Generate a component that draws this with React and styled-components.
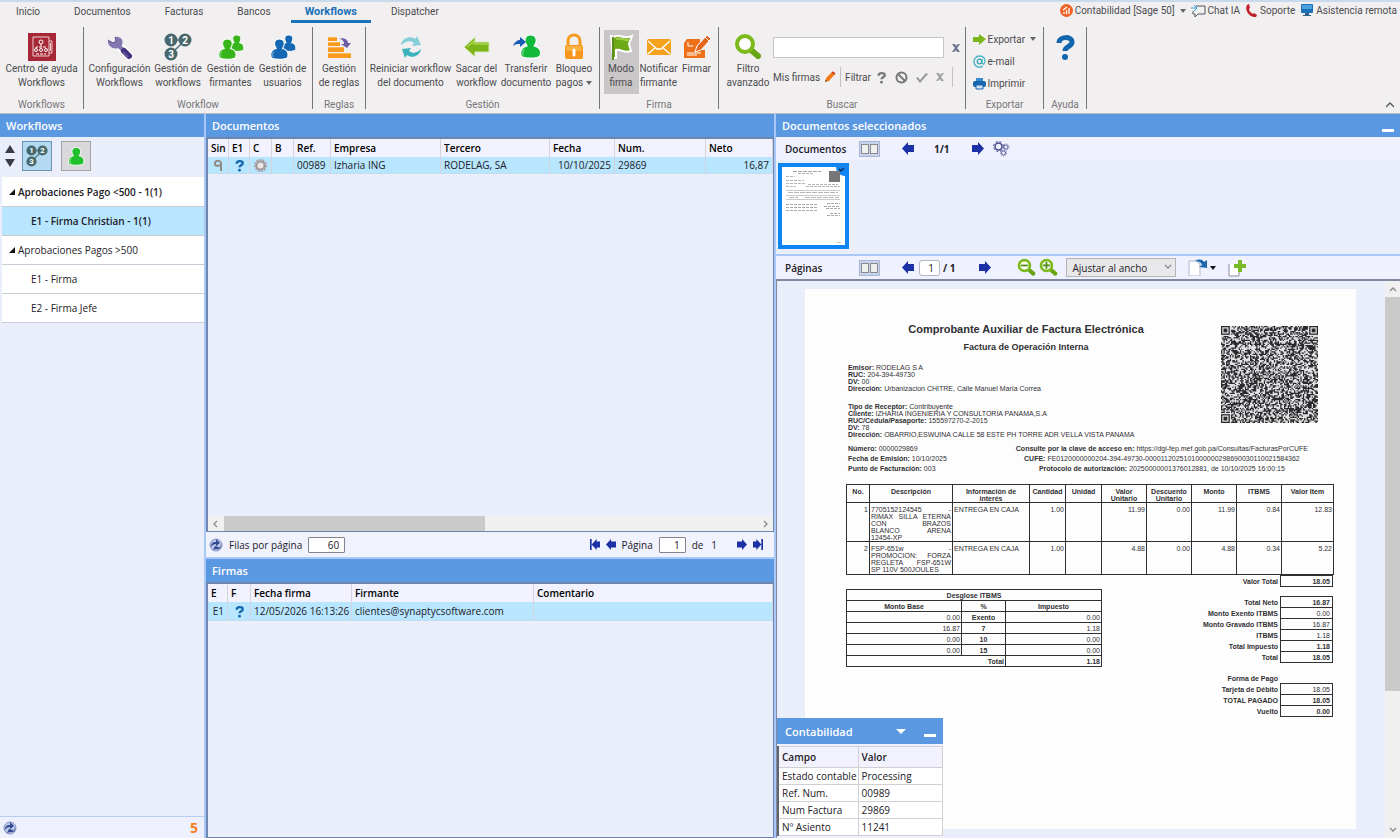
import React, { useState } from 'react';
import styled, { createGlobalStyle } from 'styled-components';

const EstiloGlobal = createGlobalStyle`
  * {
    box-sizing: border-box;
  }

  body {
    margin: 0;
    font-family: "Open Sans", "Noto Sans", sans-serif;
    font-size: 10px;
    color: #1d2026;
  }

  button, input, select {
    font-family: inherit;
    font-size: inherit;
    color: inherit;
    margin: 0;
  }

  button {
    background: none;
    border: none;
    padding: 0;
    cursor: pointer;
  }

  svg {
    display: block;
    flex: none;
  }
`;

const Contenedor = styled.div`
  display: flex;
  flex-direction: column;
  height: 100vh;
  min-height: 700px;
  overflow: hidden;
  background: #eaeefa;
`;

/* ---------- cinta superior ---------- */

const Cinta = styled.header`
  background: #f1efef;
  border-top: 2px solid #c8dbec;
  border-bottom: 1px solid #bdbdc0;
  font-family: Roboto, sans-serif;
  color: #4c4c50;
`;

const FilaPestanas = styled.div`
  display: flex;
  justify-content: space-between;
  height: 21px;
`;

const Pestanas = styled.nav`
  display: flex;
  gap: 6px;
  padding-left: 2px;
`;

const Pestana = styled.button`
  padding: 0 14px;
  border-bottom: 3px solid ${(p) => (p.$activa ? '#1b74bb' : 'transparent')};
  color: ${(p) => (p.$activa ? '#1b6fb8' : '#4c4c50')};
  font-size: ${(p) => (p.$activa ? 11 : 10)}px;
  font-weight: ${(p) => (p.$activa ? 700 : 400)};
`;

const Accesos = styled.div`
  display: flex;
  align-items: center;
  gap: 5px;
  padding: 0 3px 4px 0;
`;

const Acceso = styled.button`
  display: flex;
  align-items: center;
  gap: 2px;
  height: 16px;
`;

const Grupos = styled.div`
  display: flex;
  align-items: stretch;
  height: 90px;
  padding-top: 4px;
`;

const Grupo = styled.section`
  display: flex;
  flex-direction: column;
  align-items: center;
  width: ${(p) => p.$ancho}px;
  height: 82px;
  border-right: 1px solid #77777b;
`;

const NombreGrupo = styled.div`
  margin-top: auto;
  line-height: 8px;
  color: #77777c;
`;

const Botones = styled.div`
  display: flex;
  gap: ${(p) => p.$hueco || 0}px;
  height: 66px;
  padding-top: 3px;
`;

const BotonGrande = styled.button`
  display: flex;
  flex-direction: column;
  align-items: center;
  width: ${(p) => p.$ancho}px;
  height: 64px;
  padding-top: 3px;
  line-height: 14px;
  white-space: nowrap;
  background: ${(p) => (p.$activo ? '#c9c6c7' : 'transparent')};

  svg {
    margin-bottom: 1px;
  }
`;

const Buscador = styled.div`
  display: flex;
  flex-direction: column;
  gap: 9px;
  padding-top: 7px;
`;

const Linea = styled.div`
  display: flex;
  align-items: center;
  gap: ${(p) => p.$hueco || 4}px;
`;

const CampoBusqueda = styled.input`
  width: 171px;
  height: 21px;
  background: #ffffff;
  border: 1px solid #c6c4c7;
`;

const Separador = styled.span`
  width: 1px;
  height: 20px;
  background: #c2c0c3;
`;

const ListaExportar = styled.div`
  display: flex;
  flex-direction: column;
  gap: 6px;
  width: 64px;
  padding-top: 4px;
`;

const BotonContraer = styled.button`
  align-self: flex-end;
  margin-left: auto;
  padding: 0 6px 4px;
`;

/* ---------- paneles ---------- */

const Cuerpo = styled.main`
  flex: 1;
  min-height: 0;
  display: grid;
  grid-template-columns: 206px minmax(0, 568fr) minmax(0, 626fr);
`;

const Columna = styled.section`
  display: flex;
  flex-direction: column;
  min-width: 0;
  min-height: 0;
  border: 0 solid #a9c8f5;
  border-left-width: ${(p) => p.$izquierda || 0}px;
  border-right-width: ${(p) => p.$derecha || 0}px;
`;

const Cabecera = styled.h2`
  display: flex;
  align-items: center;
  justify-content: space-between;
  flex: none;
  height: 23px;
  margin: 0;
  padding: 0 6px;
  background: #5b98e2;
  color: #ffffff;
  font-size: 11px;
  font-weight: 600;
`;

const BarraArbol = styled.div`
  display: flex;
  align-items: center;
  gap: 9px;
  height: 40px;
  padding: 0 5px 2px;
`;

const Flechas = styled.div`
  display: flex;
  flex-direction: column;
  gap: 6px;
  margin-right: -2px;
`;

const BotonVista = styled.button`
  display: grid;
  place-items: center;
  width: 30px;
  height: 30px;
  background: ${(p) => (p.$activo ? '#b3daf0' : '#d9d9dc')};
  border: 1px solid ${(p) => (p.$activo ? '#6c93b5' : '#a3a3a6')};
`;

const Arbol = styled.ul`
  list-style: none;
  margin: 0 0 0 2px;
  padding: 0;
`;

const Nodo = styled.li`
  display: flex;
  align-items: center;
  gap: 3px;
  height: ${(p) => (p.$alto ? 30 : 29)}px;
  padding-left: ${(p) => (p.$hijo ? 29 : 7)}px;
  background: ${(p) => (p.$activo ? '#b8e6ff' : '#ffffff')};
  border-bottom: 1px solid #c9ccd6;
  font-weight: ${(p) => (p.$negrita ? 600 : 400)};
`;

const PieArbol = styled.footer`
  display: flex;
  align-items: center;
  justify-content: space-between;
  height: 22px;
  margin-top: auto;
  padding: 0 6px 0 3px;
  border-top: 1px solid #b4cdf0;
  background: #eef0fd;
`;

const Cinco = styled.b`
  color: #f58220;
  font-size: 14px;
  line-height: 20px;
`;

const Rejilla = styled.div`
  flex: 1;
  min-height: 0;
  display: flex;
  flex-direction: column;
  border: 1px solid #6f87b0;
  border-width: 2px 1px 1px 2px;
`;

const Tabla = styled.table`
  width: 100%;
  table-layout: fixed;
  border-collapse: separate;
  border-spacing: 0;

  th, td {
    height: ${(p) => p.$alto}px;
    padding: 0 3px;
    border-right: 1px solid #d6d3dc;
    text-align: left;
    line-height: 14px;
    white-space: nowrap;
  }

  th {
    height: 18px;
    background: #f1f2fd;
    color: #000000;
    font-weight: 600;
  }

  td {
    background: #b8e6fe;
    border-bottom: 1px solid #c3dcee;
  }

  td svg {
    margin: 0 auto;
  }
`;

const CeldaDerecha = styled.td`
  && {
    text-align: right;
  }
`;

const Deslizador = styled.div`
  display: flex;
  align-items: center;
  justify-content: space-between;
  flex-direction: ${(p) => (p.$vertical ? 'column' : 'row')};
  ${(p) => (p.$vertical ? 'width' : 'height')}: 15px;
  ${(p) => (p.$vertical ? 'padding: 4px 0' : 'padding: 0 4px; margin-top: auto')};
  background: #f0f0f0;
`;

const Pista = styled.div`
  flex: 1;
  ${(p) => (p.$vertical ? 'width: 15px; margin: 4px 0' : 'height: 15px; margin: 0 4px')};

  &::before {
    content: "";
    display: block;
    background: #cacaca;
    ${(p) => (p.$vertical ? 'width: 15px; height: 75%' : 'height: 15px; width: 49%')};
  }
`;

const Paginador = styled.div`
  display: flex;
  align-items: center;
  gap: 6px;
  height: 27px;
  padding: 0 11px 0 3px;
  background: #f0f2fe;
  border-bottom: 2px solid #a9c8f5;
  white-space: pre;
`;

const CampoNumero = styled.input`
  width: ${(p) => p.$ancho}px;
  height: 16px;
  padding: 0 5px;
  background: #ffffff;
  border: 1px solid ${(p) => (p.$redondo ? '#b4b6c2' : '#85858a')};
  border-radius: ${(p) => (p.$redondo ? 3 : 1)}px;
  text-align: right;
`;

const Espacio = styled.span`
  flex: ${(p) => (p.$ancho ? `0 0 ${p.$ancho}px` : 1)};
`;

const PanelFirmas = styled.div`
  display: flex;
  flex-direction: column;
  height: 279px;
`;

/* ---------- documentos seleccionados ---------- */

const BarraVisor = styled.div`
  display: flex;
  align-items: center;
  flex: none;
  height: 23px;
  padding-left: 9px;
  background: #eff1fe;
`;

const Titulo = styled.b`
  width: 74px;
  font-weight: 600;
  font-size: 10px;
`;

const BotonHojas = styled.button`
  display: grid;
  place-items: center;
  width: 21px;
  height: 16px;
  background: #c8d3ec;
  border: 1px solid #a9b6d3;
`;

const Miniaturas = styled.div`
  flex: none;
  height: 96px;
  padding: 3px 2px;
  border-bottom: 2px solid #a9c8f5;
`;

const Miniatura = styled.button`
  display: block;
  width: 71px;
  height: 86px;
  border: 4px solid #0f85f2;
  background: #ffffff;
`;

const CajaAjuste = styled.div`
  position: relative;

  svg {
    position: absolute;
    top: 5px;
    right: 4px;
    pointer-events: none;
  }
`;

const Ajuste = styled.select`
  display: block;
  appearance: none;
  width: 110px;
  height: 19px;
  padding: 0 0 0 5px;
  background: #e8e8ea;
  border: 1px solid #b4b4b9;
  border-radius: 0;
`;

const Visor = styled.div`
  position: relative;
  flex: 1;
  min-height: 0;
  display: flex;
  border: 2px solid #8189a0;
  border-width: 2px 0 0 1px;
`;

const Lienzo = styled.div`
  flex: 1;
  min-width: 0;
  display: flex;
  padding: 8px 29px 9px 28px;
`;

const Hoja = styled.article`
  flex: 1;
  min-width: 0;
  overflow: hidden;
  padding: 34px 23px 0 41px;
  background: #fefdfe;
  color: #303033;
  font-family: "Liberation Sans", Arial, sans-serif;
  font-size: 7px;
  line-height: 7px;
`;

const CabeceraHoja = styled.div`
  display: flex;
  justify-content: space-between;
  padding-right: 15px;
`;

const TextosHoja = styled.div`
  flex: 0 1 360px;
  white-space: nowrap;
`;

const TituloHoja = styled.h3`
  margin: 0 0 6px;
  font-size: ${(p) => (p.$menor ? 9 : 11)}px;
  line-height: 12px;
  text-align: center;
`;

const Bloque = styled.div`
  padding-top: ${(p) => p.$arriba}px;
`;

const Claves = styled.div`
  display: flex;
  justify-content: space-between;
  padding: 6px 25px 0 2px;
  line-height: 10px;
`;

const Centrado = styled.div`
  text-align: center;
`;

const TablaHoja = styled.table`
  width: ${(p) => p.$ancho || '100%'};
  table-layout: fixed;
  border-collapse: collapse;

  th, td {
    height: ${(p) => p.$fila || 11}px;
    padding: 0 1px;
    border: 1px solid #303033;
    vertical-align: ${(p) => (p.$fila ? 'top' : 'middle')};
    line-height: 7px;
  }

  td {
    text-align: right;
  }
`;

const Fila = styled.tr`
  && > * {
    height: ${(p) => p.$alto}px;
    padding-top: 3px;
  }
`;

const Texto = styled.td`
  && {
    text-align: left;
  }
`;

const LineaJusta = styled.div`
  text-align: justify;
  text-align-last: ${(p) => (p.$ultima ? 'left' : 'justify')};
`;

const PieHoja = styled.div`
  display: flex;
  justify-content: space-between;
`;

const Desglose = styled.div`
  flex: 0 1 255px;
  padding-top: 14px;
`;

const Resumen = styled.table`
  border-collapse: collapse;
  margin-left: auto;

  th {
    padding: 0 2px 0 0;
    text-align: right;
    line-height: 9px;
  }

  td {
    width: 52px;
    height: ${(p) => p.$alto || 11}px;
    padding: 0 2px;
    border: 1px solid #303033;
    text-align: right;
    font-weight: ${(p) => (p.$negrita ? 700 : 400)};
  }
`;

const Celda = styled.td`
  && {
    font-weight: ${(p) => (p.$negrita ? 700 : 400)};
    border-color: ${(p) => (p.$libre ? 'transparent transparent #303033' : '#303033')};
  }
`;

const Flotante = styled.aside`
  position: absolute;
  left: 0;
  bottom: 0;
  width: 166px;
  padding-bottom: 2px;
  background: #eef0fb;
`;

const CabeceraFlotante = styled(Cabecera)`
  height: 26px;
  margin-bottom: 2px;
  padding: 0 7px 0 8px;
`;

const TablaCampos = styled.table`
  width: 100%;
  table-layout: fixed;
  border-collapse: collapse;
  border: 1px solid #63656c;
  border-left-width: 2px;
  background: #ffffff;

  th, td {
    height: ${(p) => p.$alto}px;
    padding: 0 3px;
    border: 1px solid #cfcfd4;
    line-height: 14px;
    text-align: left;
    white-space: nowrap;
  }

  th {
    height: 21px;
    background: #f1f2fd;
    font-weight: 600;
  }
`;

/* ---------- iconos ---------- */

const Svg = ({ w = 28, h = w, box = '0 0 28 28', children }) => (
  <svg width={w} height={h} viewBox={box} fill="none" aria-hidden="true">
    {children}
  </svg>
);

const IconoAyudaCentro = () => (
  <Svg>
    <rect width="28" height="28" fill="#a62836" />
    <path d="M5 4h16v19H5zM21 8h3v12h-3M22.500 10v8" stroke="#f3cdd0" />
    <circle cx="13" cy="9" r="2" stroke="#fff" />
    <path d="M13 11v3M8 15v-1h10v1M8 21h10" stroke="#fff" strokeDasharray="3 1" />
    <circle cx="8" cy="17" r="1.500" stroke="#fff" />
    <circle cx="13" cy="17" r="1.500" stroke="#fff" />
    <circle cx="18" cy="17" r="1.500" stroke="#fff" />
  </Svg>
);

const IconoLlave = () => (
  <Svg>
    <path d="M12 12l11 11" stroke="#fff" strokeWidth="8" strokeLinecap="round" />
    <path d="M2 7l5 3 3-2-1-4C15 3 18 8 16 12l-3 3C7 17 1 13 2 7z" fill="#8377b0" />
    <path d="M2 7l5 3 3-2-1-4" stroke="#5c4f91" />
    <path d="M12 12l5 5" stroke="#8377b0" strokeWidth="4" />
    <path d="M18 18l5 5" stroke="#42317d" strokeWidth="6" strokeLinecap="round" />
    <path d="M17 19l5 5" stroke="#6b5ba3" strokeWidth="1.500" />
  </Svg>
);

const IconoPasos = ({ tam = 28 }) => (
  <Svg w={tam}>
    <path d="M7 7h14L7 21" stroke="#55777c" strokeWidth="1.500" />
    {[[7, 7, 1], [21, 7, 2], [7, 21, 3]].map(([x, y, n]) => (
      <g key={n}>
        <circle cx={x} cy={y} r="6.500" fill="#47696e" />
        <text x={x} y={y + 3.5} fill="#fff" fontSize="10" fontWeight="700" textAnchor="middle" fontFamily="Roboto, sans-serif">
          {n}
        </text>
      </g>
    ))}
  </Svg>
);

const Persona = ({ color, x = 0, y = 0, escala = 1 }) => (
  <g transform={`translate(${x} ${y}) scale(${escala})`}>
    <path
      d="M8 0c5 0 6 5 3 9 4 1 6 4 5 8-1 3-15 3-16 0-1-4 1-7 5-8C2 5 3 0 8 0z"
      fill={color}
      stroke="#fff"
      strokeWidth="1"
    />
    <path d="M3 12c-2 1-2 3-1 5" stroke="#fff" strokeOpacity="0.3" strokeWidth="1.500" />
  </g>
);

const IconoPersonas = ({ color }) => (
  <Svg>
    <Persona color={color} x={13} y={2} escala={0.85} />
    <Persona color={color} x={2} y={6} escala={1.05} />
  </Svg>
);

const IconoReglas = () => (
  <Svg>
    <path d="M3 4h9v4H3zM3 9h12v4H3zM3 14h16v5H3zM3 20h23v5H3z" fill="#f79a1e" />
    <path d="M3 4h9v1H3zM3 9h12v1H3zM3 14h16v1H3zM3 20h23v1H3z" fill="#fbb84f" />
    <path d="M14 6c5-2 9 1 9 4h3l-4 5-6-4h3c0-3-2-5-5-5z" fill="#6d5da6" />
  </Svg>
);

const IconoReiniciar = () => (
  <Svg>
    <path d="M4 12C5 5 13 2 18 6l2-3 4 9-9 1 2-3c-4-3-8-2-13 2z" fill="#84cfd9" />
    <path d="M24 16c-1 7-9 10-14 6l-2 3-3-9 9-1-2 3c4 3 8 2 12-2z" fill="#3cb2bc" />
  </Svg>
);

const IconoFlechaVerde = () => (
  <Svg>
    <path d="M1 14L12 4v5h14v10H12v5z" fill="#7cb518" stroke="#d8ecc0" />
    <path d="M4 14l7-6v3h14" stroke="#a9d34c" strokeWidth="1.500" />
  </Svg>
);

const IconoTransferir = () => (
  <Svg>
    <Persona color="#12b93b" x={9} y={2} escala={1.2} />
    <path d="M1 13c2-5 5-6 7-6V4l6 5-6 5v-3c-3 0-4 0-7 2z" fill="#1c5bb5" />
  </Svg>
);

const IconoCandado = () => (
  <Svg>
    <path d="M8 13V8c0-8 12-8 12 0v5" stroke="#f59b1c" strokeWidth="3" />
    <rect x="5" y="12" width="18" height="14" rx="2" fill="#f7951d" />
    <rect x="6" y="13" width="16" height="5" rx="1" fill="#fab243" />
    <path d="M14 17v5" stroke="#fff" strokeWidth="3" strokeLinecap="round" />
  </Svg>
);

const IconoBandera = () => (
  <Svg>
    <path d="M7 4c6-4 9 3 18-1l-3 8 2 7c-8 3-10-3-15-1v8H6L4 3z" fill="#6da817" stroke="#fff" strokeWidth="2" />
    <path d="M6 4v23" stroke="#5b8f1b" strokeWidth="2" />
    <path d="M9 6c5-2 8 2 13 1" stroke="#a2cf4c" strokeWidth="2" />
  </Svg>
);

const IconoSobre = () => (
  <Svg>
    <rect x="2" y="6" width="24" height="16" rx="2" fill="#f5a11b" />
    <path d="M3 8l9 8h4l9-8M3 21l8-7M25 21l-8-7" stroke="#fff" strokeWidth="1.300" />
  </Svg>
);

const IconoFirmar = () => (
  <Svg>
    <path d="M4 6h13v4l-4 7h9v8H1V10z" fill="#ee7019" />
    <path d="M4 20h14M4 22h10M5 9v4h5" stroke="#fff" />
    <path d="M12 19l2-6L24 2l4 4-10 11z" fill="#e4651b" stroke="#fff" />
    <path d="M22 4l4 4" stroke="#fff" />
  </Svg>
);

const IconoLupa = ({ tam = 28, signo }) => (
  <Svg w={tam}>
    <path d="M17 17l7 6" stroke="#68a516" strokeWidth="6" strokeLinecap="round" />
    <circle cx="11" cy="11" r="8" stroke="#7dba1d" strokeWidth="4" fill="#fdfdfd" />
    {signo && <path d={signo === '+' ? 'M11 6v10M6 11h10' : 'M6 11h10'} stroke="#4f8a10" strokeWidth="2.500" />}
  </Svg>
);

const IconoPregunta = ({ tam = 28, color = '#1266ae' }) => (
  <Svg w={tam}>
    <path d="M8 10c0-7 13-7 13-1 0 5-7 4-7 9" stroke={color} strokeWidth="5" />
    <circle cx="14" cy="24" r="3" fill={color} />
  </Svg>
);

const IconoLapiz = () => (
  <Svg w={12} box="0 0 12 12">
    <path d="M1 11l1-4 6-6 3 2-6 7z" fill="#f07a1c" />
    <path d="M8 1l3 2" stroke="#d33d1c" strokeWidth="2" />
    <path d="M1 11l1-2 1 1z" fill="#333" />
  </Svg>
);

const Equis = ({ color }) => (
  <Svg w={10} box="0 0 10 10">
    <path d="M1 1h3l1 2 2-2h2L6 5l3 4H6L5 7 3 9H1l3-4z" fill={color} />
  </Svg>
);

const IconoProhibido = () => (
  <Svg w={13} box="0 0 13 13">
    <circle cx="6.500" cy="6.500" r="5" stroke="#77777a" strokeWidth="2" />
    <path d="M3 3l7 7" stroke="#77777a" strokeWidth="2" />
  </Svg>
);

const IconoVisto = () => (
  <Svg w={13} box="0 0 13 13">
    <path d="M1 7l2-1 2 3 6-7 2 1-8 9z" fill="#98989b" />
  </Svg>
);

const IconoExportar = () => (
  <Svg w={13} box="0 0 13 13">
    <path d="M0 4h6V1l7 5-7 6V9H0z" fill="#7ab51d" />
  </Svg>
);

const IconoCorreo = () => (
  <Svg w={13} box="0 0 13 13">
    <circle cx="6.500" cy="6.500" r="2.300" stroke="#2a9db5" strokeWidth="1.300" />
    <path d="M9 4v4c1 2 3 1 3-2C12 2 9 1 6 1 3 1 1 4 1 7c0 4 5 7 9 4" stroke="#46b4c9" strokeWidth="1.300" />
  </Svg>
);

const IconoImprimir = () => (
  <Svg w={13} box="0 0 13 13">
    <path d="M3 1h7v3H3z" fill="#3a8ad0" />
    <rect y="4" width="13" height="6" rx="2" fill="#1766ac" />
    <path d="M3 8h7v4H3z" fill="#cfe4f6" stroke="#1766ac" />
  </Svg>
);

const Caret = ({ color = '#66666a' }) => (
  <Svg w={6} h={4} box="0 0 6 4">
    <path d="M0 0h6L3 4z" fill={color} />
  </Svg>
);

const IconoSage = () => (
  <Svg w={13} box="0 0 13 13">
    <circle cx="6.500" cy="6.500" r="6.500" fill="#f0642a" />
    <path d="M4 10V8M6.500 10V6M9 10V4M3 6l4-3" stroke="#fff" strokeWidth="1.300" />
  </Svg>
);

const IconoChat = () => (
  <Svg w={15} h={14} box="0 0 15 14">
    <path d="M5 2h9v8H7l-3 3v-3H2V7" stroke="#4e565f" />
    <path d="M0 4h5M3 1l3 3-3 3" stroke="#2e9ed6" />
  </Svg>
);

const IconoTelefono = () => (
  <Svg w={13} box="0 0 13 13">
    <path d="M2 1l2-1 1 4-1 1c0 2 2 4 4 5l1-1 3 2-1 2C5 14-1 6 2 1z" fill="#c11f2b" />
  </Svg>
);

const IconoMonitor = () => (
  <Svg w={14} h={13} box="0 0 14 13">
    <rect x="1" y="0" width="12" height="9" rx="1" fill="#1a6fb8" />
    <rect x="2" y="1" width="10" height="4" fill="#4ba0de" />
    <path d="M5 9h4v2h2v1H3v-1h2z" fill="#2c5f8c" />
  </Svg>
);

const FlechaAzul = ({ derecha, tope, tam = 12 }) => (
  <Svg w={tam} h={tam + 1} box="0 0 12 13">
    <g transform={derecha ? 'translate(12 0) scale(-1 1)' : undefined}>
      {tope ? (
        <path d="M0 0h2v13H0zM2 6.500L8 0v3h4v7H8v3z" fill="#1c31a5" />
      ) : (
        <path d="M0 6.500L6 0v3h6v7H6v3z" fill="#1c31a5" />
      )}
    </g>
  </Svg>
);

const IconoHojas = () => (
  <Svg w={17} h={10} box="0 0 17 10">
    <rect x="0.500" y="0.500" width="7" height="9" fill="#efeff0" stroke="#8a8a8e" />
    <rect x="9.500" y="0.500" width="7" height="9" fill="#efeff0" stroke="#8a8a8e" />
  </Svg>
);

const IconoEngranes = () => (
  <Svg w={17} h={16} box="0 0 17 16">
    <circle cx="5.500" cy="5.500" r="3.500" stroke="#4b4a8e" strokeWidth="1.500" />
    <circle cx="5.500" cy="5.500" r="5" stroke="#4b4a8e" strokeDasharray="2 2" />
    <circle cx="13" cy="6" r="2" stroke="#6463a5" />
    <circle cx="13" cy="6" r="3" stroke="#6463a5" strokeDasharray="1 1" />
    <circle cx="10.500" cy="12" r="2" stroke="#6463a5" />
    <circle cx="10.500" cy="12" r="3" stroke="#6463a5" strokeDasharray="1 1" />
  </Svg>
);

const IconoRefrescar = () => (
  <Svg w={14} box="0 0 14 14">
    <circle cx="7" cy="7" r="6" fill="#b9c7e8" stroke="#8593c4" />
    <path d="M2 9c0-4 2-5 5-5V1l4 4-4 3V6C5 6 3 7 2 9z" fill="#34488f" />
    <path d="M12 6c1 4-2 6-5 5l-3 1 2-4 4 1-1 1c2 0 3-2 3-4z" fill="#34488f" />
  </Svg>
);

const IconoBoligrafo = () => (
  <Svg w={12} h={13} box="0 0 12 13">
    <path d="M8 6C5 8 2 6 3 4c1-3 6-3 6 1v7" stroke="#8f8981" strokeWidth="2" />
  </Svg>
);

const IconoEngrane = () => (
  <Svg w={13} box="0 0 13 13">
    <circle cx="6.500" cy="6.500" r="5.500" stroke="#a9a2a4" strokeWidth="2" strokeDasharray="2 1" />
    <circle cx="6.500" cy="6.500" r="4" fill="#ebe6e7" stroke="#a39b9e" strokeWidth="2" />
  </Svg>
);

const Triangulo = ({ abajo }) => (
  <Svg w={10} h={8} box="0 0 10 8">
    <path d={abajo ? 'M0 0h10L5 8z' : 'M0 8h10L5 0z'} fill="#3b3d45" />
  </Svg>
);

const Desplegado = () => (
  <Svg w={6} box="0 0 6 6">
    <path d="M6 0v6H0z" fill="#111" />
  </Svg>
);

const Chevron = ({ d, color = '#8a8a90' }) => (
  <Svg w={8} box="0 0 8 8">
    <path d={d} stroke={color} strokeWidth="1.300" />
  </Svg>
);

const Minimizar = () => (
  <Svg w={12} h={12} box="0 0 12 12">
    <path d="M0 9h12v3H0z" fill="#fff" />
  </Svg>
);

const IconoGirar = () => (
  <Svg w={20} h={17} box="0 0 20 17">
    <path d="M1 2h7l4 3v12H1z" fill="#fff" stroke="#b3b8c6" />
    <path d="M7 2c4-2 7-2 9 1l3-2v8l-8-1 3-2c-1-3-4-4-7-4z" fill="#1d67af" />
  </Svg>
);

const IconoAnadir = () => (
  <Svg w={19} h={18} box="0 0 19 18">
    <path d="M1 5h10v12H1z" fill="#fff" />
    <path d="M1 5v12h10v-6" stroke="#8b8f9a" />
    <path d="M10 1h4v4h4v4h-4v4h-4V9H6V5h4z" fill="#78b928" />
  </Svg>
);

// Trama de módulos con una semilla fija para que no cambie entre renders
const MODULOS = 77;

const crearTrama = () => {
  let semilla = 20251010;
  let d = '';
  for (let y = 0; y < MODULOS; y += 1) {
    for (let x = 0; x < MODULOS; x += 1) {
      semilla = (semilla * 1103515245 + 12345) % 2147483648;
      const esquina = (x < 8 || x > MODULOS - 9) && (y < 8 || y > MODULOS - 9);
      const abajoDerecha = x > MODULOS - 9 && y > MODULOS - 9;
      if ((!esquina || abajoDerecha) && semilla / 2147483648 > 0.48) {
        d += `M${x} ${y}h1v1h-1z`;
      }
    }
  }
  return d;
};

const TRAMA = crearTrama();

const CodigoQR = ({ tam = 97 }) => (
  <Svg w={tam} box={`0 0 ${MODULOS} ${MODULOS}`}>
    <rect width={MODULOS} height={MODULOS} fill="#e2e2e4" />
    <path d={TRAMA} fill="#2a2a2d" />
    {[[0, 0], [MODULOS - 7, 0], [0, MODULOS - 7]].map(([x, y]) => (
      <g key={`${x}-${y}`}>
        <rect x={x + 0.5} y={y + 0.5} width="6" height="6" stroke="#2a2a2d" />
        <rect x={x + 2} y={y + 2} width="3" height="3" fill="#2a2a2d" />
      </g>
    ))}
  </Svg>
);

const VistaMiniatura = () => (
  <Svg w={63} h={78} box="0 0 63 78">
    <path d="M54 0h9v9c-5 0-9-4-9-9z" fill="#0f85f2" />
    <path d="M57 2l2 2 3-3" stroke="#0c2a55" strokeWidth="1.500" />
    <rect x="47" y="4" width="11" height="11" fill="#77777a" />
    <path d="M11 4.500h28" stroke="#a4a4a7" strokeDasharray="4 1" />
    <path d="M16 6.500h16M4 9.500h9M4 13.500h18M4 16.500h20M4 19.500h10M26 17.500h30M24 19.500h34" stroke="#b4b4b7" strokeDasharray="3 1" />
    <path d="M4 23.500h54M4 28.500h54M4 32.500h54" stroke="#c9c9cc" />
    <path d="M6 25.500h50M7 30.500h9M23 30.500h34" stroke="#b4b4b7" strokeDasharray="5 1" />
    <path d="M4 37.500h31M4 40.500h31M4 43.500h31M45 36.500h13M42 39.500h16M44 41.500h14M48 46.500h10M45 48.500h13" stroke="#a9a9ac" strokeDasharray="3 1" />
    <path d="M55 75.500h4" stroke="#c4c4c6" />
  </Svg>
);

/* ---------- datos ---------- */

const PESTANAS = ['Inicio', 'Documentos', 'Facturas', 'Bancos', 'Workflows', 'Dispatcher'];

const GRUPOS = [
  {
    nombre: 'Workflows',
    ancho: 84,
    botones: [{ lineas: ['Centro de ayuda', 'Workflows'], ancho: 80, icono: <IconoAyudaCentro /> }],
  },
  {
    nombre: 'Workflow',
    ancho: 229,
    botones: [
      { lineas: ['Configuración', 'Workflows'], ancho: 64, icono: <IconoLlave /> },
      { lineas: ['Gestión de', 'workflows'], ancho: 53, icono: <IconoPasos /> },
      { lineas: ['Gestión de', 'firmantes'], ancho: 52, icono: <IconoPersonas color="#37b51b" /> },
      { lineas: ['Gestión de', 'usuarios'], ancho: 52, icono: <IconoPersonas color="#1467b3" /> },
    ],
  },
  {
    nombre: 'Reglas',
    ancho: 53,
    botones: [{ lineas: ['Gestión', 'de reglas'], ancho: 50, icono: <IconoReglas /> }],
  },
  {
    nombre: 'Gestión',
    ancho: 234,
    botones: [
      { lineas: ['Reiniciar workflow', 'del documento'], ancho: 84, icono: <IconoReiniciar /> },
      { lineas: ['Sacar del', 'workflow'], ancho: 48, icono: <IconoFlechaVerde /> },
      { lineas: ['Transferir', 'documento'], ancho: 51, icono: <IconoTransferir /> },
      { lineas: ['Bloqueo', 'pagos'], ancho: 45, icono: <IconoCandado />, menu: true },
    ],
  },
  {
    nombre: 'Firma',
    ancho: 119,
    botones: [
      { lineas: ['Modo', 'firma'], ancho: 35, icono: <IconoBandera />, activo: true },
      { lineas: ['Notificar', 'firmante'], ancho: 40, icono: <IconoSobre /> },
      { lineas: ['Firmar'], ancho: 36, icono: <IconoFirmar /> },
    ],
  },
];

const ARBOL = [
  { texto: 'Aprobaciones Pago <500 - 1(1)', negrita: true, alto: true },
  { texto: 'E1 - Firma Christian - 1(1)', negrita: true, hijo: true, activo: true },
  { texto: 'Aprobaciones Pagos >500' },
  { texto: 'E1 - Firma', hijo: true },
  { texto: 'E2 - Firma Jefe', hijo: true },
];

const COLUMNAS = [
  ['Sin', 21],
  ['E1', 21],
  ['C', 22],
  ['B', 22],
  ['Ref.', 37],
  ['Empresa', 110],
  ['Tercero', 109],
  ['Fecha', 65],
  ['Num.', 91],
  ['Neto'],
];

const ARTICULOS = [
  {
    alto: 39,
    descripcion: ['7705152124545 -', 'RIMAX SILLA ETERNA', 'CON BRAZOS', 'BLANCO ARENA', '12454-XP'],
    valores: ['11.99', '0.00', '11.99', '0.84', '12.83'],
  },
  {
    alto: 33,
    descripcion: ['FSP-651w -', 'PROMOCION: FORZA', 'REGLETA FSP-651W', 'SP 110V 500JOULES'],
    valores: ['4.88', '0.00', '4.88', '0.34', '5.22'],
  },
];

const IMPUESTOS = [
  ['0.00', 'Exento', '0.00'],
  ['16.87', '7', '1.18'],
  ['0.00', '10', '0.00'],
  ['0.00', '15', '0.00'],
];

const TOTALES = [
  ['Total Neto', '16.87', true],
  ['Monto Exento ITBMS', '0.00'],
  ['Monto Gravado ITBMS', '16.87'],
  ['ITBMS', '1.18'],
  ['Total Impuesto', '1.18', true],
  ['Total', '18.05', true],
];

const PAGOS = [
  ['Tarjeta de Débito', '18.05'],
  ['TOTAL PAGADO', '18.05', true],
  ['Vuelto', '0.00', true],
];

const CAMPOS = [
  ['Estado contable', 'Processing'],
  ['Ref. Num.', '00989'],
  ['Num Factura', '29869'],
  ['Nº Asiento', '11241'],
];

/* ---------- componentes ---------- */

function Ribbon() {
  const [pestana, setPestana] = useState('Workflows');
  const [busqueda, setBusqueda] = useState('');

  return (
    <Cinta>
      <FilaPestanas>
        <Pestanas>
          {PESTANAS.map((nombre) => (
            <Pestana key={nombre} $activa={nombre === pestana} onClick={() => setPestana(nombre)}>
              {nombre}
            </Pestana>
          ))}
        </Pestanas>
        <Accesos>
          <Acceso><IconoSage />Contabilidad [Sage 50] <Espacio $ancho={1} /><Caret /></Acceso>
          <Acceso><IconoChat />Chat IA</Acceso>
          <Acceso><IconoTelefono />Soporte</Acceso>
          <Acceso><IconoMonitor />Asistencia remota</Acceso>
        </Accesos>
      </FilaPestanas>
      <Grupos>
        {GRUPOS.map((grupo) => (
          <Grupo key={grupo.nombre} $ancho={grupo.ancho}>
            <Botones>
              {grupo.botones.map((b) => (
                <BotonGrande key={b.lineas.join(' ')} $ancho={b.ancho} $activo={b.activo}>
                  {b.icono}
                  <span>{b.lineas[0]}</span>
                  {b.menu ? (
                    <Linea $hueco={3}><span>{b.lineas[1]}</span><Caret /></Linea>
                  ) : (
                    <span>{b.lineas[1]}</span>
                  )}
                </BotonGrande>
              ))}
            </Botones>
            <NombreGrupo>{grupo.nombre}</NombreGrupo>
          </Grupo>
        ))}
        <Grupo $ancho={247}>
          <Botones>
            <BotonGrande $ancho={50}>
              <IconoLupa />
              <span>Filtro</span>
              <span>avanzado</span>
            </BotonGrande>
            <Buscador>
              <Linea $hueco={7}>
                <CampoBusqueda
                  aria-label="Buscar"
                  value={busqueda}
                  onChange={(e) => setBusqueda(e.target.value)}
                />
                <button aria-label="Limpiar" onClick={() => setBusqueda('')}><Equis color="#67708d" /></button>
              </Linea>
              <Linea>
                <button>Mis firmas</button>
                <button aria-label="Firmas"><IconoLapiz /></button>
                <Separador />
                <span>Filtrar</span>
                <Linea $hueco={7}>
                  <button aria-label="Pendiente"><IconoPregunta tam={13} color="#77777a" /></button>
                  <button aria-label="Rechazado"><IconoProhibido /></button>
                  <button aria-label="Aprobado"><IconoVisto /></button>
                  <button aria-label="Quitar"><Equis color="#a0a0a3" /></button>
                  <Separador />
                </Linea>
              </Linea>
            </Buscador>
          </Botones>
          <NombreGrupo>Buscar</NombreGrupo>
        </Grupo>
        <Grupo $ancho={78}>
          <ListaExportar>
            <Acceso><IconoExportar />Exportar <Espacio $ancho={1} /><Caret /></Acceso>
            <Acceso><IconoCorreo />e-mail</Acceso>
            <Acceso><IconoImprimir />Imprimir</Acceso>
          </ListaExportar>
          <NombreGrupo>Exportar</NombreGrupo>
        </Grupo>
        <Grupo $ancho={43}>
          <Botones>
            <BotonGrande $ancho={40} aria-label="Ayuda"><IconoPregunta /></BotonGrande>
          </Botones>
          <NombreGrupo>Ayuda</NombreGrupo>
        </Grupo>
        <BotonContraer aria-label="Contraer"><Chevron d="M0 6l4-4 4 4" color="#55555a" /></BotonContraer>
      </Grupos>
    </Cinta>
  );
}

function PanelWorkflows() {
  return (
    <Columna $derecha={2}>
      <Cabecera>Workflows</Cabecera>
      <BarraArbol>
        <Flechas>
          <button aria-label="Subir"><Triangulo /></button>
          <button aria-label="Bajar"><Triangulo abajo /></button>
        </Flechas>
        <BotonVista $activo aria-label="Por workflow"><IconoPasos tam={22} /></BotonVista>
        <BotonVista aria-label="Por firmante">
          <Svg w={20}><Persona color="#20c02c" x={4} y={2} escala={1.3} /></Svg>
        </BotonVista>
      </BarraArbol>
      <Arbol>
        {ARBOL.map((n) => (
          <Nodo key={n.texto} $hijo={n.hijo} $negrita={n.negrita} $activo={n.activo} $alto={n.alto}>
            {!n.hijo && <Desplegado />}
            <span>{n.texto}</span>
          </Nodo>
        ))}
      </Arbol>
      <PieArbol>
        <button aria-label="Refrescar"><IconoRefrescar /></button>
        <Cinco>5</Cinco>
      </PieArbol>
    </Columna>
  );
}

function PanelDocumentos() {
  return (
    <Columna>
      <Cabecera>Documentos</Cabecera>
      <Rejilla>
        <Tabla $alto={17}>
          <colgroup>
            {COLUMNAS.map(([nombre, ancho]) => (
              <col key={nombre} width={ancho} />
            ))}
          </colgroup>
          <thead>
            <tr>{COLUMNAS.map(([nombre]) => <th key={nombre}>{nombre}</th>)}</tr>
          </thead>
          <tbody>
            <tr>
              <td><IconoBoligrafo /></td>
              <td><IconoPregunta tam={13} /></td>
              <td><IconoEngrane /></td>
              <td />
              <td>00989</td>
              <td>Izharia ING</td>
              <td>RODELAG, SA</td>
              <CeldaDerecha>10/10/2025</CeldaDerecha>
              <td>29869</td>
              <CeldaDerecha>16,87</CeldaDerecha>
            </tr>
          </tbody>
        </Tabla>
        <Deslizador>
          <Chevron d="M5 1L2 4l3 3" />
          <Pista />
          <Chevron d="M3 1l3 3-3 3" />
        </Deslizador>
      </Rejilla>
      <Paginador>
        <button aria-label="Refrescar"><IconoRefrescar /></button>
        <label htmlFor="filas">Filas por página</label>
        <CampoNumero id="filas" $ancho={37} defaultValue="60" />
        <Espacio />
        <button aria-label="Primera"><FlechaAzul tope tam={10} /></button>
        <button aria-label="Anterior"><FlechaAzul tam={10} /></button>
        <label htmlFor="pagina">Página</label>
        <CampoNumero id="pagina" $ancho={27} defaultValue="1" />
        <span>de   1</span>
        <Espacio $ancho={8} />
        <button aria-label="Siguiente"><FlechaAzul derecha tam={10} /></button>
        <button aria-label="Última"><FlechaAzul derecha tope tam={10} /></button>
      </Paginador>
      <PanelFirmas>
        <Cabecera>Firmas</Cabecera>
        <Rejilla>
          <Tabla $alto={19}>
            <colgroup>
              <col width={20} />
              <col width={23} />
              <col width={101} />
              <col width={182} />
              <col />
            </colgroup>
            <thead>
              <tr>
                <th>E</th>
                <th>F</th>
                <th>Fecha firma</th>
                <th>Firmante</th>
                <th>Comentario</th>
              </tr>
            </thead>
            <tbody>
              <tr>
                <CeldaDerecha>E1</CeldaDerecha>
                <td><IconoPregunta tam={13} /></td>
                <td>12/05/2026 16:13:26</td>
                <td>clientes@synaptycsoftware.com</td>
                <td />
              </tr>
            </tbody>
          </Tabla>
        </Rejilla>
      </PanelFirmas>
    </Columna>
  );
}

function Factura() {
  return (
    <Hoja>
      <CabeceraHoja>
        <TextosHoja>
          <TituloHoja>Comprobante Auxiliar de Factura Electrónica</TituloHoja>
          <TituloHoja $menor>Factura de Operación Interna</TituloHoja>
          <Bloque $arriba={5}>
            <div>&nbsp;<b>Emisor:</b> RODELAG S A</div>
            <div>&nbsp;<b>RUC:</b> 204-394-49730</div>
            <div>&nbsp;<b>DV:</b> 00</div>
            <div>&nbsp;<b>Dirección:</b> Urbanizacion CHITRE, Calle Manuel María Correa</div>
          </Bloque>
          <Bloque $arriba={11}>
            <div>&nbsp;<b>Tipo de Receptor:</b> Contribuyente</div>
            <div>&nbsp;<b>Cliente:</b> IZHARIA INGENIERIA Y CONSULTORIA PANAMA,S.A</div>
            <div>&nbsp;<b>RUC/Cédula/Pasaporte:</b> 155597270-2-2015</div>
            <div>&nbsp;<b>DV:</b> 78</div>
            <div>&nbsp;<b>Dirección:</b> OBARRIO,ESWUINA CALLE 58 ESTE PH TORRE ADR VELLA VISTA PANAMA</div>
          </Bloque>
        </TextosHoja>
        <Bloque $arriba={3}><CodigoQR /></Bloque>
      </CabeceraHoja>
      <Claves>
        <div>
          <div><b>Número:</b> 0000029869</div>
          <div><b>Fecha de Emisión:</b> 10/10/2025</div>
          <div><b>Punto de Facturación:</b> 003</div>
        </div>
        <Centrado>
          <div><b>Consulte por la clave de acceso en:</b> https://dgi-fep.mef.gob.pa/Consultas/FacturasPorCUFE</div>
          <div><b>CUFE:</b> FE0120000000204-394-49730-0000112025101000000298690030110021584362</div>
          <div><b>Protocolo de autorización:</b> 20250000001376012881, de 10/10/2025 16:00:15</div>
        </Centrado>
      </Claves>
      <Bloque $arriba={10}>
        <TablaHoja $fila={18}>
          <colgroup>
            {[23, 83, 77, 36, 36, 45, 45, 45, 45, 52].map((ancho, i) => (
              <col key={i} width={ancho} />
            ))}
          </colgroup>
          <thead>
            <Fila $alto={18}>
              <th>No.</th>
              <th>Descripción</th>
              <th>Información de interés</th>
              <th>Cantidad</th>
              <th>Unidad</th>
              <th>Valor Unitario</th>
              <th>Descuento Unitario</th>
              <th>Monto</th>
              <th>ITBMS</th>
              <th>Valor Item</th>
            </Fila>
          </thead>
          <tbody>
            {ARTICULOS.map((art, i) => (
              <Fila key={art.descripcion[0]} $alto={art.alto}>
                <td>{i + 1}</td>
                <td>
                  {art.descripcion.map((linea, j) => (
                    <LineaJusta key={linea} $ultima={j === art.descripcion.length - 1}>{linea}</LineaJusta>
                  ))}
                </td>
                <Texto>ENTREGA EN CAJA</Texto>
                <td>1.00</td>
                <td />
                {art.valores.map((valor, j) => <td key={j}>{valor}</td>)}
              </Fila>
            ))}
          </tbody>
        </TablaHoja>
      </Bloque>
      <PieHoja>
        <Desglose>
          <TablaHoja>
            <colgroup>
              <col width={115} />
              <col width={44} />
              <col width={96} />
            </colgroup>
            <thead>
              <tr><th colSpan={3}>Desglose ITBMS</th></tr>
              <tr><th>Monto Base</th><th>%</th><th>Impuesto</th></tr>
            </thead>
            <tbody>
              {IMPUESTOS.map(([base, tasa, impuesto]) => (
                <tr key={tasa}>
                  <td>{base}</td>
                  <th>{tasa}</th>
                  <td>{impuesto}</td>
                </tr>
              ))}
              <tr>
                <td colSpan={2}><b>Total</b></td>
                <td><b>1.18</b></td>
              </tr>
            </tbody>
          </TablaHoja>
        </Desglose>
        <div>
          <Resumen $negrita>
            <tbody><tr><th>Valor Total</th><td>18.05</td></tr></tbody>
          </Resumen>
          <Bloque $arriba={9}>
            <Resumen>
              <tbody>
                {TOTALES.map(([nombre, valor, negrita]) => (
                  <tr key={nombre}><th>{nombre}</th><Celda $negrita={negrita}>{valor}</Celda></tr>
                ))}
              </tbody>
            </Resumen>
          </Bloque>
          <Bloque $arriba={9}>
            <Resumen>
              <tbody>
                <tr><th>Forma de Pago</th><Celda $libre /></tr>
                {PAGOS.map(([nombre, valor, negrita]) => (
                  <tr key={nombre}><th>{nombre}</th><Celda $negrita={negrita}>{valor}</Celda></tr>
                ))}
              </tbody>
            </Resumen>
          </Bloque>
        </div>
      </PieHoja>
    </Hoja>
  );
}

function PanelContabilidad() {
  return (
    <Flotante>
      <CabeceraFlotante>
        Contabilidad
        <Espacio />
        <button aria-label="Opciones">
          <Svg w={10} h={5} box="0 0 10 5"><path d="M0 0h10L5 5z" fill="#fff" /></Svg>
        </button>
        <Espacio $ancho={18} />
        <button aria-label="Minimizar"><Minimizar /></button>
      </CabeceraFlotante>
      <TablaCampos $alto={17}>
        <colgroup>
          <col width={80} />
          <col />
        </colgroup>
        <thead>
          <tr><th>Campo</th><th>Valor</th></tr>
        </thead>
        <tbody>
          {CAMPOS.map(([campo, valor]) => (
            <tr key={campo}><td>{campo}</td><td>{valor}</td></tr>
          ))}
        </tbody>
      </TablaCampos>
    </Flotante>
  );
}

function PanelSeleccion() {
  return (
    <Columna $izquierda={2}>
      <Cabecera>
        Documentos seleccionados
        <button aria-label="Minimizar"><Minimizar /></button>
      </Cabecera>
      <BarraVisor>
        <Titulo>Documentos</Titulo>
        <BotonHojas aria-label="Miniaturas"><IconoHojas /></BotonHojas>
        <Espacio $ancho={22} />
        <button aria-label="Documento anterior"><FlechaAzul /></button>
        <Espacio $ancho={20} />
        <b>1/1</b>
        <Espacio $ancho={22} />
        <button aria-label="Documento siguiente"><FlechaAzul derecha /></button>
        <Espacio $ancho={9} />
        <button aria-label="Ajustes"><IconoEngranes /></button>
      </BarraVisor>
      <Miniaturas>
        <Miniatura aria-label="Documento 1"><VistaMiniatura /></Miniatura>
      </Miniaturas>
      <BarraVisor>
        <Titulo>Páginas</Titulo>
        <BotonHojas aria-label="Ver páginas"><IconoHojas /></BotonHojas>
        <Espacio $ancho={22} />
        <button aria-label="Página anterior"><FlechaAzul /></button>
        <Espacio $ancho={5} />
        <CampoNumero $ancho={21} $redondo defaultValue="1" aria-label="Número de página" />
        <Espacio $ancho={3} />
        <b>/ 1</b>
        <Espacio $ancho={24} />
        <button aria-label="Página siguiente"><FlechaAzul derecha /></button>
        <Espacio $ancho={26} />
        <button aria-label="Alejar"><IconoLupa tam={19} signo="-" /></button>
        <Espacio $ancho={3} />
        <button aria-label="Acercar"><IconoLupa tam={19} signo="+" /></button>
        <Espacio $ancho={8} />
        <CajaAjuste>
          <Ajuste aria-label="Ajuste" defaultValue="ancho">
            <option value="ancho">Ajustar al ancho</option>
            <option value="pagina">Ajustar a la página</option>
          </Ajuste>
          <Chevron d="M1 2l3 3 3-3" />
        </CajaAjuste>
        <Espacio $ancho={12} />
        <button aria-label="Girar"><IconoGirar /></button>
        <Espacio $ancho={2} />
        <Caret color="#111" />
        <Espacio $ancho={12} />
        <button aria-label="Añadir"><IconoAnadir /></button>
      </BarraVisor>
      <Visor>
        <Lienzo>
          <Factura />
        </Lienzo>
        <Deslizador $vertical>
          <Chevron d="M1 6l3-3 3 3" />
          <Pista $vertical />
          <Chevron d="M1 2l3 3 3-3" />
        </Deslizador>
        <PanelContabilidad />
      </Visor>
    </Columna>
  );
}

function App() {
  return (
    <>
      <EstiloGlobal />
      <Contenedor>
        <Ribbon />
        <Cuerpo>
          <PanelWorkflows />
          <PanelDocumentos />
          <PanelSeleccion />
        </Cuerpo>
      </Contenedor>
    </>
  );
}

export default App;
